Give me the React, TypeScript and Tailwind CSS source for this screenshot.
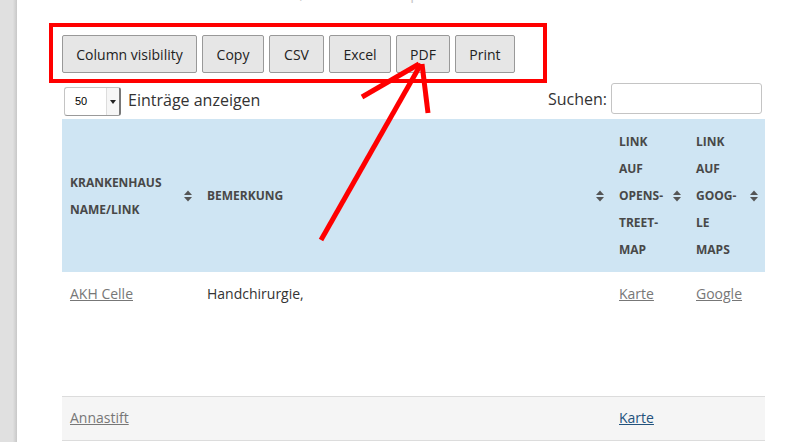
import React from 'react';

// Sort indicator (up + down triangles)
const SortIcon = () => (
  <svg width="8" height="12" viewBox="0 0 8 12" className="shrink-0">
    <path d="M0 5 L4 0.5 L8 5 Z" fill="#555" />
    <path d="M0 7 L4 11.5 L8 7 Z" fill="#555" />
  </svg>
);

const buttons = [
  { label: 'Column visibility', w: 'w-[135px]' },
  { label: 'Copy', w: 'w-[62px]' },
  { label: 'CSV', w: 'w-[55px]' },
  { label: 'Excel', w: 'w-[62px]' },
  { label: 'PDF', w: 'w-[54px]' },
  { label: 'Print', w: 'w-[60px]' },
];

const HeadCell = ({ lines }: { lines: string[] }) => (
  <th className="p-0 font-bold align-middle">
    <div className="flex h-[153px] items-center justify-between pl-2 pr-[7px]">
      <div className="text-left text-[12px] leading-[27px] text-[#484848]">
        {lines.map((l) => (
          <div key={l}>{l}</div>
        ))}
      </div>
      <SortIcon />
    </div>
  </th>
);

export default function App() {
  return (
    <div className="relative flex h-[442px] w-[794px] overflow-hidden bg-white font-['Open_Sans',sans-serif] text-[#333]">
      {/* left sidebar edge */}
      <div className="w-[17px] shrink-0 bg-[linear-gradient(to_right,#e0e0e0_75%,#c8c8c8)]" />

      <div className="flex flex-1 flex-col pl-[32px]">
        {/* intro line, scrolled almost out of view */}
        <p className="-mt-[17px] h-[20px] pl-[52px] text-[15px] leading-[20px] text-[#c8c8c8] whitespace-nowrap">
          Die Tabelle kann durchsucht, sortiert und exportiert werden.
        </p>

        {/* export buttons, framed */}
        <div className="mt-[20px] flex w-[498px] gap-[5px] border-4 border-[#ff0000] pb-[6px] pl-[9px] pt-[8px]">
          {buttons.map((b) => (
            <button
              key={b.label}
              className={`${b.w} h-[38px] rounded-[2px] border border-[#999] bg-[#e6e6e6] text-[14px] text-[#222]`}
            >
              {b.label}
            </button>
          ))}
        </div>

        {/* length + search */}
        <div className="ml-[13px] flex h-[36px] w-[703px] items-start justify-between pr-[3px]">
          <div className="ml-[2px] mt-[4px] flex items-center gap-[7px]">
            <div className="flex h-[29px] w-[57px] items-stretch overflow-hidden rounded-[3px] border border-[#c4c4c4] border-b-[#9a9a9a] border-r-2 border-r-[#777] bg-white">
              <span className="flex flex-1 items-center pl-[10px] font-['Liberation_Sans',sans-serif] text-[11px] text-black">50</span>
              <span className="flex w-[13px] items-center justify-center border-l border-[#ddd] bg-[#f6f6f6]">
                <svg width="6" height="4" viewBox="0 0 6 4">
                  <path d="M0 0 H6 L3 4 Z" fill="#222" />
                </svg>
              </span>
            </div>
            <span className="-mt-[3px] text-[16px] leading-[20px]">Einträge anzeigen</span>
          </div>
          <div className="flex items-center gap-[4px]">
            <span className="text-[16px] leading-[20px]">Suchen:</span>
            <input className="h-[31px] w-[151px] rounded-[3px] border border-[#c4c4c4] bg-white outline-none" />
          </div>
        </div>

        {/* table */}
        <table className="ml-[13px] w-[703px] table-fixed border-collapse">
          <colgroup>
            <col className="w-[137px]" />
            <col className="w-[412px]" />
            <col className="w-[77px]" />
            <col className="w-[77px]" />
          </colgroup>
          <thead className="bg-[#cfe5f3]">
            <tr>
              <HeadCell lines={['KRANKENHAUS', 'NAME/LINK']} />
              <HeadCell lines={['BEMERKUNG']} />
              <HeadCell lines={['LINK', 'AUF', 'OPENS-', 'TREET-', 'MAP']} />
              <HeadCell lines={['LINK', 'AUF', 'GOOG-', 'LE', 'MAPS']} />
            </tr>
          </thead>
          <tbody className="text-[14px] leading-[20px]">
            <tr className="h-[124px] border-b border-[#dcdcdc] bg-white align-top">
              <td className="pl-2 pt-[12px]">
                <a href="#" className="text-[#777] underline">AKH Celle</a>
              </td>
              <td className="pl-2 pt-[12px]">Handchirurgie,</td>
              <td className="pl-2 pt-[12px]">
                <a href="#" className="text-[#777] underline">Karte</a>
              </td>
              <td className="pl-2 pt-[12px]">
                <a href="#" className="text-[#777] underline">Google</a>
              </td>
            </tr>
            <tr className="h-[44px] border-b border-[#dcdcdc] bg-[#f5f5f5] align-top">
              <td className="pl-2 pt-[11px]">
                <a href="#" className="text-[#777] underline">Annastift</a>
              </td>
              <td className="pl-2 pt-[11px]" />
              <td className="pl-2 pt-[11px]">
                <a href="#" className="text-[#23527c] underline">Karte</a>
              </td>
              <td className="pl-2 pt-[11px]" />
            </tr>
          </tbody>
        </table>
      </div>

      {/* hand-drawn red arrow annotation */}
      <svg
        className="pointer-events-none absolute left-0 top-0"
        width="794"
        height="442"
        viewBox="0 0 794 442"
      >
        <g fill="none" stroke="#ff0000" strokeWidth="5" strokeLinejoin="round">
          <path d="M321 240 L421 64" />
          <path d="M362 97 L419 64" />
          <path d="M422 64 L428 113" />
        </g>
      </svg>
    </div>
  );
}
